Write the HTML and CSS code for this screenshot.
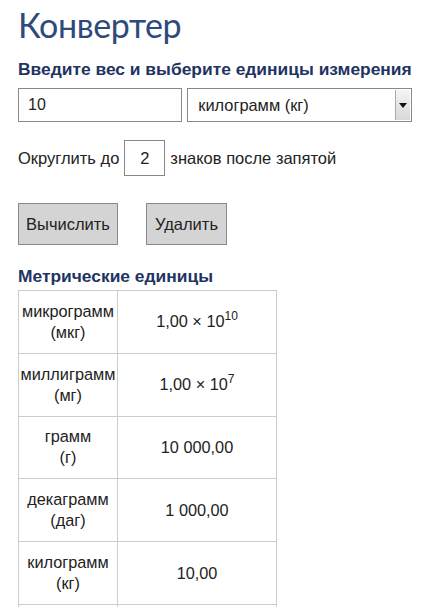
FILE: index.html
```html
<!DOCTYPE html>
<html lang="ru">
<head>
<meta charset="utf-8">
<link rel="stylesheet" href="styles.css">
</head>
<body>
<div class="page">
  <h1 class="title">Конвертер</h1>
  <h2 class="subtitle">Введите вес и выберите единицы измерения</h2>
  <div class="inputs">
    <div class="field">10</div>
    <div class="select">
      <span class="select-text">килограмм (кг)</span>
      <span class="select-btn"><svg width="8" height="5" viewBox="0 0 8 5"><path d="M0 0H8L4 5Z" fill="#111"/></svg></span>
    </div>
  </div>
  <div class="round">
    <span>Округлить до</span>
    <div class="small-field">2</div>
    <span>знаков после запятой</span>
  </div>
  <div class="buttons">
    <div class="btn btn-calc">Вычислить</div>
    <div class="btn btn-del">Удалить</div>
  </div>
  <h3 class="section">Метрические единицы</h3>
  <table class="units">
    <tr><td class="name">микрограмм<br>(мкг)</td><td class="val">1,00 × 10<sup>10</sup></td></tr>
    <tr><td class="name">миллиграмм<br>(мг)</td><td class="val">1,00 × 10<sup>7</sup></td></tr>
    <tr><td class="name">грамм<br>(г)</td><td class="val">10 000,00</td></tr>
    <tr><td class="name">декаграмм<br>(даг)</td><td class="val">1 000,00</td></tr>
    <tr><td class="name">килограмм<br>(кг)</td><td class="val">10,00</td></tr>
    <tr><td class="name">тонна<br>(т)</td><td class="val">0,01</td></tr>
  </table>
</div>
</body>
</html>
```
FILE: styles.css
```css
html, body {
  margin: 0;
  padding: 0;
  background: #fff;
}
body {
  font-family: "Liberation Sans", Arial, sans-serif;
  color: #222;
}
.page {
  padding: 0 18px;
}
.title {
  margin: 0;
  padding-top: 3px;
  font-family: Lato, "Open Sans", sans-serif;
  font-weight: 400;
  font-size: 34px;
  line-height: 44px;
  color: #2e4a7c;
  letter-spacing: -0.4px;
}
.subtitle {
  margin: 11px 0 0;
  font-size: 17.4px;
  line-height: 22px;
  font-weight: 700;
  color: #1f3461;
}
.inputs {
  display: flex;
  gap: 5px;
  margin-top: 8px;
}
.field {
  box-sizing: border-box;
  width: 165px;
  height: 34px;
  border: 1px solid #888;
  padding: 0 9px;
  font-size: 16px;
  line-height: 32px;
  color: #222;
}
.select {
  box-sizing: border-box;
  width: 226px;
  height: 34px;
  border: 1px solid #888;
  display: flex;
  align-items: stretch;
}
.select-text {
  flex: 1;
  padding-left: 10px;
  font-size: 16.4px;
  line-height: 32px;
}
.select-btn {
  width: 14px;
  margin: 1px 1px 1px 0;
  background: linear-gradient(#f4f4f4, #d8d8d8);
  border-left: 1px solid #aaa;
  display: flex;
  align-items: center;
  justify-content: center;
}
.round {
  display: flex;
  align-items: center;
  gap: 5px;
  margin-top: 18px;
  font-size: 16.5px;
}
.small-field {
  box-sizing: border-box;
  width: 41px;
  height: 36px;
  border: 1px solid #888;
  text-align: center;
  line-height: 34px;
  font-size: 16.5px;
}
.buttons {
  display: flex;
  gap: 28px;
  margin-top: 27px;
}
.btn {
  box-sizing: border-box;
  height: 42px;
  background: #d4d4d4;
  border: 1px solid #888;
  font-size: 16.5px;
  line-height: 40px;
  text-align: center;
}
.btn-calc { width: 100px; }
.btn-del { width: 81px; }
.section {
  margin: 20px 0 0;
  font-size: 17.4px;
  line-height: 22px;
  font-weight: 700;
  color: #1f3461;
}
.units {
  border-collapse: collapse;
  margin-top: 3px;
  font-size: 16.3px;
}
.units td {
  border: 1px solid #ccc;
  text-align: center;
  vertical-align: middle;
  height: 61.8px;
  padding: 0;
  line-height: 21px;
}
.units .name {
  width: 98px;
  font-size: 16.3px;
}
.units .val { width: 158px; }
.units sup {
  font-size: 12px;
  line-height: 0;
  vertical-align: 7px;
}
```
